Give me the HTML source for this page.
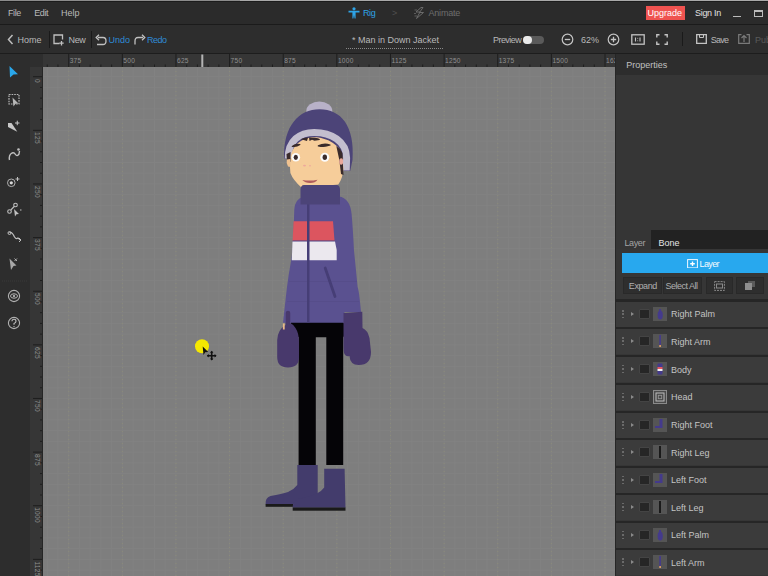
<!DOCTYPE html>
<html><head><meta charset="utf-8">
<style>
*{margin:0;padding:0;box-sizing:border-box}
html,body{width:768px;height:576px;overflow:hidden;background:#2b2b2b;font-family:"Liberation Sans",sans-serif;font-size:9px;color:#b9b9b9}
.a{position:absolute}
.t{position:absolute;white-space:nowrap;line-height:10px}
.rl{position:absolute;font-size:6.6px;color:#909090;line-height:6px;white-space:nowrap;letter-spacing:0.25px}
.row{position:absolute;left:616px;width:152px;height:27px;background:#3b3b3b;border-top:2px solid #262626}
.row .lb{position:absolute;left:55px;top:7.5px;line-height:10px;color:#c4c4c4}
.row .cb{position:absolute;left:23px;top:7px;width:11px;height:10px;background:#262626;border:1px solid #444;border-radius:1px}
.row .th{position:absolute;left:37px;top:5px;width:14px;height:14px;background:#4e4e4e}
.row .tr{position:absolute;left:15px;top:10px;width:0;height:0;border-left:3.5px solid #8a8a8a;border-top:2.5px solid transparent;border-bottom:2.5px solid transparent}
.row .dh{position:absolute;left:6px;top:8px;width:1.5px;height:8px;background:repeating-linear-gradient(#6a6a6a 0 1.5px,transparent 1.5px 3.3px)}
</style></head><body>
<div class="a" style="left:0;top:0;width:768px;height:1px;background:#a9a9a9"></div>
<div class="a" style="left:0;top:0;width:240px;height:1px;background:#8c8c8c"></div>
<div class="a" style="left:0;top:1px;width:768px;height:1px;background:#1c1c1c"></div>
<div class="a" style="left:0;top:2px;width:768px;height:22px;background:#2b2b2b"></div>
<div class="a" style="left:0;top:24px;width:768px;height:1px;background:#1b1b1b"></div>
<div class="t" style="left:8px;top:8px;letter-spacing:-0.4px">File</div>
<div class="t" style="left:34.2px;top:8px;letter-spacing:-0.4px">Edit</div>
<div class="t" style="left:61px;top:8px">Help</div>
<svg class="a" style="left:348px;top:7px" width="12" height="12" viewBox="0 0 12 12">
<circle cx="6" cy="1.8" r="1.6" fill="#2ea3e6"/>
<path d="M0.5,3.8 L11.5,3.8 L11.5,5.4 L7.6,5.4 L7.6,11.5 L6.6,11.5 L6,8 L5.4,11.5 L4.4,11.5 L4.4,5.4 L0.5,5.4 Z" fill="#2ea3e6"/>
</svg>
<div class="t" style="left:363px;top:8px;color:#2ea3e6;letter-spacing:-0.4px">Rig</div>
<div class="t" style="left:392px;top:8px;color:#505050">&gt;</div>
<svg class="a" style="left:414px;top:7px" width="11" height="12" viewBox="0 0 11 12">
<path d="M7,0.5 L2,5 L6,5 L2.5,11.5 L9.5,5.5 L5.5,5.5 L9,0.5 Z" fill="none" stroke="#6a6a6a" stroke-width="1"/>
<path d="M0.5,3 L3,3 M0,6.5 L2,6.5 M0.5,9 L3,9" stroke="#6a6a6a" stroke-width="0.8"/>
</svg>
<div class="t" style="left:428.5px;top:8px;color:#6e6e6e;letter-spacing:-0.2px">Animate</div>
<div class="a" style="left:645.5px;top:5.5px;width:39px;height:14.5px;background:#ef5350"></div>
<div class="t" style="left:647.5px;top:8px;color:#fff">Upgrade</div>
<div class="t" style="left:695px;top:8px;color:#e0e0e0;letter-spacing:-0.3px">Sign In</div>
<div class="a" style="left:732.5px;top:15.5px;width:8.5px;height:1.3px;background:#bbb"></div>
<div class="a" style="left:754px;top:10px;width:9px;height:7px;border:1px solid #bbb;border-top-width:2px"></div>
<div class="a" style="left:0;top:25px;width:768px;height:28px;background:#2d2d2d"></div>
<div class="a" style="left:0;top:53px;width:768px;height:1px;background:#1d1d1d"></div>
<svg class="a" style="left:7px;top:34px" width="7" height="11" viewBox="0 0 7 11"><path d="M5.5,1 L1.5,5.5 L5.5,10" stroke="#bdbdbd" stroke-width="1.5" fill="none"/></svg>
<div class="t" style="left:17.5px;top:35px">Home</div>
<div class="a" style="left:49px;top:31px;width:1px;height:17px;background:#1a1a1a"></div>
<svg class="a" style="left:53px;top:34px" width="12" height="12" viewBox="0 0 12 12"><path d="M6.5,9.5 L1,9.5 L1,1 L9.5,1 L9.5,5.5" stroke="#c0c0c0" stroke-width="1.3" fill="none"/><path d="M8.5,7 L8.5,11.5 M6.3,9.2 L10.7,9.2" stroke="#c0c0c0" stroke-width="1.3"/></svg>
<div class="t" style="left:68.5px;top:35px;letter-spacing:-0.35px">New</div>
<div class="a" style="left:90.5px;top:31px;width:1px;height:17px;background:#1a1a1a"></div>
<svg class="a" style="left:95px;top:34px" width="12" height="12" viewBox="0 0 12 12"><path d="M3,3.5 L8,3.5 Q11,3.5 11,7 Q11,10.5 8,10.5 L2,10.5" stroke="#c0c0c0" stroke-width="1.3" fill="none"/><path d="M4,0.8 L1.2,3.5 L4,6.2" stroke="#c0c0c0" stroke-width="1.3" fill="none"/></svg>
<div class="t" style="left:108.5px;top:35px;color:#2f8bd6">Undo</div>
<svg class="a" style="left:134px;top:34px" width="12" height="12" viewBox="0 0 12 12"><path d="M9,3.5 L4,3.5 Q1,3.5 1,7 L1,10.5" stroke="#c0c0c0" stroke-width="1.3" fill="none"/><path d="M8,0.8 L10.8,3.5 L8,6.2" stroke="#c0c0c0" stroke-width="1.3" fill="none"/></svg>
<div class="t" style="left:147px;top:35px;color:#2f8bd6;letter-spacing:-0.5px">Redo</div>
<div class="t" style="left:352px;top:35px">* Man in Down Jacket</div>
<div class="a" style="left:346px;top:47.5px;width:97px;height:1px;background:repeating-linear-gradient(90deg,#8a8a8a 0 1px,transparent 1px 2px)"></div>
<div class="t" style="left:493px;top:35px;color:#b8b8b8;letter-spacing:-0.55px">Preview</div>
<div class="a" style="left:523px;top:36px;width:21px;height:7.5px;border-radius:4px;background:#5a5a5a"></div>
<div class="a" style="left:523px;top:35.5px;width:8.5px;height:8.5px;border-radius:50%;background:#eaeaea"></div>
<svg class="a" style="left:561px;top:33px" width="13" height="13" viewBox="0 0 13 13"><circle cx="6.5" cy="6.5" r="5.3" stroke="#c4c4c4" stroke-width="1.2" fill="none"/><path d="M3.8,6.5 L9.2,6.5" stroke="#c4c4c4" stroke-width="1.3"/></svg>
<div class="t" style="left:581px;top:35px">62%</div>
<svg class="a" style="left:606.5px;top:33px" width="13" height="13" viewBox="0 0 13 13"><circle cx="6.5" cy="6.5" r="5.3" stroke="#c4c4c4" stroke-width="1.2" fill="none"/><path d="M3.8,6.5 L9.2,6.5 M6.5,3.8 L6.5,9.2" stroke="#c4c4c4" stroke-width="1.3"/></svg>
<svg class="a" style="left:631px;top:34px" width="14" height="11" viewBox="0 0 14 11"><rect x="0.8" y="0.8" width="12.4" height="9.4" stroke="#c4c4c4" stroke-width="1.3" fill="none"/><path d="M4.5,3.5 L4.5,7.5 M9,3.5 L9,7.5" stroke="#c4c4c4" stroke-width="1.1"/><circle cx="6.75" cy="4.3" r="0.5" fill="#c4c4c4"/><circle cx="6.75" cy="6.7" r="0.5" fill="#c4c4c4"/></svg>
<svg class="a" style="left:656px;top:34px" width="12" height="11" viewBox="0 0 12 11"><path d="M0.8,3.5 L0.8,0.8 L3.5,0.8 M8.5,0.8 L11.2,0.8 L11.2,3.5 M11.2,7.5 L11.2,10.2 L8.5,10.2 M3.5,10.2 L0.8,10.2 L0.8,7.5" stroke="#c4c4c4" stroke-width="1.4" fill="none"/></svg>
<div class="a" style="left:681.5px;top:31.5px;width:1px;height:14px;background:#1a1a1a"></div>
<svg class="a" style="left:695.5px;top:34px" width="11" height="10" viewBox="0 0 11 10"><path d="M0.7,0.7 L10.3,0.7 L10.3,9.3 L0.7,9.3 Z" stroke="#c4c4c4" stroke-width="1.3" fill="none"/><path d="M3.5,0.7 L3.5,3.5 L7.5,3.5 L7.5,0.7" stroke="#c4c4c4" stroke-width="1" fill="none"/></svg>
<div class="t" style="left:710.8px;top:35px;letter-spacing:-0.8px">Save</div>
<svg class="a" style="left:738px;top:34px" width="12" height="10" viewBox="0 0 12 10"><path d="M3.5,0.7 L0.7,0.7 L0.7,9.3 L11.3,9.3 L11.3,0.7 L8.5,0.7" stroke="#7a7a7a" stroke-width="1.2" fill="none"/><path d="M6,8 L6,1.5 M3.5,4 L6,1.5 L8.5,4" stroke="#7a7a7a" stroke-width="1.2" fill="none"/></svg>
<div class="t" style="left:755px;top:35px;color:#5a5a5a">Pub</div>
<div class="a" style="left:0;top:54px;width:30px;height:522px;background:#2d2d2d"></div>
<div class="a" style="left:30px;top:54px;width:13px;height:522px;background:#363636"></div>
<div class="a" style="left:30px;top:54px;width:13px;height:13px;background:#2e2e2e"></div>
<div class="a" style="left:43px;top:54px;width:572px;height:13px;background:#363636"></div>
<div class="a" style="left:43px;top:67px;width:572px;height:509px;background:#7e7e7e"></div>
<svg class="a" style="left:43px;top:67px" width="572" height="509">
<line x1="4.25" y1="0" x2="4.25" y2="509" stroke="#828282" stroke-width="1"/>
<line x1="14.97" y1="0" x2="14.97" y2="509" stroke="#828282" stroke-width="1"/>
<line x1="25.70" y1="0" x2="25.70" y2="509" stroke="#828282" stroke-width="1"/>
<line x1="36.43" y1="0" x2="36.43" y2="509" stroke="#828282" stroke-width="1"/>
<line x1="47.15" y1="0" x2="47.15" y2="509" stroke="#828282" stroke-width="1"/>
<line x1="57.88" y1="0" x2="57.88" y2="509" stroke="#828282" stroke-width="1"/>
<line x1="68.60" y1="0" x2="68.60" y2="509" stroke="#828282" stroke-width="1"/>
<line x1="79.33" y1="0" x2="79.33" y2="509" stroke="#828282" stroke-width="1"/>
<line x1="90.06" y1="0" x2="90.06" y2="509" stroke="#828282" stroke-width="1"/>
<line x1="100.78" y1="0" x2="100.78" y2="509" stroke="#828282" stroke-width="1"/>
<line x1="111.51" y1="0" x2="111.51" y2="509" stroke="#828282" stroke-width="1"/>
<line x1="122.23" y1="0" x2="122.23" y2="509" stroke="#828282" stroke-width="1"/>
<line x1="132.96" y1="0" x2="132.96" y2="509" stroke="#828282" stroke-width="1"/>
<line x1="143.69" y1="0" x2="143.69" y2="509" stroke="#828282" stroke-width="1"/>
<line x1="154.41" y1="0" x2="154.41" y2="509" stroke="#828282" stroke-width="1"/>
<line x1="165.14" y1="0" x2="165.14" y2="509" stroke="#828282" stroke-width="1"/>
<line x1="175.86" y1="0" x2="175.86" y2="509" stroke="#828282" stroke-width="1"/>
<line x1="186.59" y1="0" x2="186.59" y2="509" stroke="#828282" stroke-width="1"/>
<line x1="197.32" y1="0" x2="197.32" y2="509" stroke="#828282" stroke-width="1"/>
<line x1="208.04" y1="0" x2="208.04" y2="509" stroke="#828282" stroke-width="1"/>
<line x1="218.77" y1="0" x2="218.77" y2="509" stroke="#828282" stroke-width="1"/>
<line x1="229.49" y1="0" x2="229.49" y2="509" stroke="#828282" stroke-width="1"/>
<line x1="240.22" y1="0" x2="240.22" y2="509" stroke="#828282" stroke-width="1"/>
<line x1="250.95" y1="0" x2="250.95" y2="509" stroke="#828282" stroke-width="1"/>
<line x1="261.67" y1="0" x2="261.67" y2="509" stroke="#828282" stroke-width="1"/>
<line x1="272.40" y1="0" x2="272.40" y2="509" stroke="#828282" stroke-width="1"/>
<line x1="283.12" y1="0" x2="283.12" y2="509" stroke="#828282" stroke-width="1"/>
<line x1="293.85" y1="0" x2="293.85" y2="509" stroke="#828282" stroke-width="1"/>
<line x1="304.58" y1="0" x2="304.58" y2="509" stroke="#828282" stroke-width="1"/>
<line x1="315.30" y1="0" x2="315.30" y2="509" stroke="#828282" stroke-width="1"/>
<line x1="326.03" y1="0" x2="326.03" y2="509" stroke="#828282" stroke-width="1"/>
<line x1="336.75" y1="0" x2="336.75" y2="509" stroke="#828282" stroke-width="1"/>
<line x1="347.48" y1="0" x2="347.48" y2="509" stroke="#828282" stroke-width="1"/>
<line x1="358.21" y1="0" x2="358.21" y2="509" stroke="#828282" stroke-width="1"/>
<line x1="368.93" y1="0" x2="368.93" y2="509" stroke="#828282" stroke-width="1"/>
<line x1="379.66" y1="0" x2="379.66" y2="509" stroke="#828282" stroke-width="1"/>
<line x1="390.38" y1="0" x2="390.38" y2="509" stroke="#828282" stroke-width="1"/>
<line x1="401.11" y1="0" x2="401.11" y2="509" stroke="#828282" stroke-width="1"/>
<line x1="411.84" y1="0" x2="411.84" y2="509" stroke="#828282" stroke-width="1"/>
<line x1="422.56" y1="0" x2="422.56" y2="509" stroke="#828282" stroke-width="1"/>
<line x1="433.29" y1="0" x2="433.29" y2="509" stroke="#828282" stroke-width="1"/>
<line x1="444.01" y1="0" x2="444.01" y2="509" stroke="#828282" stroke-width="1"/>
<line x1="454.74" y1="0" x2="454.74" y2="509" stroke="#828282" stroke-width="1"/>
<line x1="465.47" y1="0" x2="465.47" y2="509" stroke="#828282" stroke-width="1"/>
<line x1="476.19" y1="0" x2="476.19" y2="509" stroke="#828282" stroke-width="1"/>
<line x1="486.92" y1="0" x2="486.92" y2="509" stroke="#828282" stroke-width="1"/>
<line x1="497.64" y1="0" x2="497.64" y2="509" stroke="#828282" stroke-width="1"/>
<line x1="508.37" y1="0" x2="508.37" y2="509" stroke="#828282" stroke-width="1"/>
<line x1="519.10" y1="0" x2="519.10" y2="509" stroke="#828282" stroke-width="1"/>
<line x1="529.82" y1="0" x2="529.82" y2="509" stroke="#828282" stroke-width="1"/>
<line x1="540.55" y1="0" x2="540.55" y2="509" stroke="#828282" stroke-width="1"/>
<line x1="551.27" y1="0" x2="551.27" y2="509" stroke="#828282" stroke-width="1"/>
<line x1="562.00" y1="0" x2="562.00" y2="509" stroke="#828282" stroke-width="1"/>
<line x1="0" y1="9.70" x2="572" y2="9.70" stroke="#828282" stroke-width="1"/>
<line x1="0" y1="20.43" x2="572" y2="20.43" stroke="#828282" stroke-width="1"/>
<line x1="0" y1="31.15" x2="572" y2="31.15" stroke="#828282" stroke-width="1"/>
<line x1="0" y1="41.88" x2="572" y2="41.88" stroke="#828282" stroke-width="1"/>
<line x1="0" y1="52.60" x2="572" y2="52.60" stroke="#828282" stroke-width="1"/>
<line x1="0" y1="63.33" x2="572" y2="63.33" stroke="#828282" stroke-width="1"/>
<line x1="0" y1="74.06" x2="572" y2="74.06" stroke="#828282" stroke-width="1"/>
<line x1="0" y1="84.78" x2="572" y2="84.78" stroke="#828282" stroke-width="1"/>
<line x1="0" y1="95.51" x2="572" y2="95.51" stroke="#828282" stroke-width="1"/>
<line x1="0" y1="106.23" x2="572" y2="106.23" stroke="#828282" stroke-width="1"/>
<line x1="0" y1="116.96" x2="572" y2="116.96" stroke="#828282" stroke-width="1"/>
<line x1="0" y1="127.69" x2="572" y2="127.69" stroke="#828282" stroke-width="1"/>
<line x1="0" y1="138.41" x2="572" y2="138.41" stroke="#828282" stroke-width="1"/>
<line x1="0" y1="149.14" x2="572" y2="149.14" stroke="#828282" stroke-width="1"/>
<line x1="0" y1="159.86" x2="572" y2="159.86" stroke="#828282" stroke-width="1"/>
<line x1="0" y1="170.59" x2="572" y2="170.59" stroke="#828282" stroke-width="1"/>
<line x1="0" y1="181.32" x2="572" y2="181.32" stroke="#828282" stroke-width="1"/>
<line x1="0" y1="192.04" x2="572" y2="192.04" stroke="#828282" stroke-width="1"/>
<line x1="0" y1="202.77" x2="572" y2="202.77" stroke="#828282" stroke-width="1"/>
<line x1="0" y1="213.49" x2="572" y2="213.49" stroke="#828282" stroke-width="1"/>
<line x1="0" y1="224.22" x2="572" y2="224.22" stroke="#828282" stroke-width="1"/>
<line x1="0" y1="234.95" x2="572" y2="234.95" stroke="#828282" stroke-width="1"/>
<line x1="0" y1="245.67" x2="572" y2="245.67" stroke="#828282" stroke-width="1"/>
<line x1="0" y1="256.40" x2="572" y2="256.40" stroke="#828282" stroke-width="1"/>
<line x1="0" y1="267.12" x2="572" y2="267.12" stroke="#828282" stroke-width="1"/>
<line x1="0" y1="277.85" x2="572" y2="277.85" stroke="#828282" stroke-width="1"/>
<line x1="0" y1="288.58" x2="572" y2="288.58" stroke="#828282" stroke-width="1"/>
<line x1="0" y1="299.30" x2="572" y2="299.30" stroke="#828282" stroke-width="1"/>
<line x1="0" y1="310.03" x2="572" y2="310.03" stroke="#828282" stroke-width="1"/>
<line x1="0" y1="320.75" x2="572" y2="320.75" stroke="#828282" stroke-width="1"/>
<line x1="0" y1="331.48" x2="572" y2="331.48" stroke="#828282" stroke-width="1"/>
<line x1="0" y1="342.21" x2="572" y2="342.21" stroke="#828282" stroke-width="1"/>
<line x1="0" y1="352.93" x2="572" y2="352.93" stroke="#828282" stroke-width="1"/>
<line x1="0" y1="363.66" x2="572" y2="363.66" stroke="#828282" stroke-width="1"/>
<line x1="0" y1="374.38" x2="572" y2="374.38" stroke="#828282" stroke-width="1"/>
<line x1="0" y1="385.11" x2="572" y2="385.11" stroke="#828282" stroke-width="1"/>
<line x1="0" y1="395.84" x2="572" y2="395.84" stroke="#828282" stroke-width="1"/>
<line x1="0" y1="406.56" x2="572" y2="406.56" stroke="#828282" stroke-width="1"/>
<line x1="0" y1="417.29" x2="572" y2="417.29" stroke="#828282" stroke-width="1"/>
<line x1="0" y1="428.01" x2="572" y2="428.01" stroke="#828282" stroke-width="1"/>
<line x1="0" y1="438.74" x2="572" y2="438.74" stroke="#828282" stroke-width="1"/>
<line x1="0" y1="449.47" x2="572" y2="449.47" stroke="#828282" stroke-width="1"/>
<line x1="0" y1="460.19" x2="572" y2="460.19" stroke="#828282" stroke-width="1"/>
<line x1="0" y1="470.92" x2="572" y2="470.92" stroke="#828282" stroke-width="1"/>
<line x1="0" y1="481.64" x2="572" y2="481.64" stroke="#828282" stroke-width="1"/>
<line x1="0" y1="492.37" x2="572" y2="492.37" stroke="#828282" stroke-width="1"/>
<line x1="0" y1="503.10" x2="572" y2="503.10" stroke="#828282" stroke-width="1"/>
<line x1="25.70" y1="0" x2="25.70" y2="509" stroke="#8b8b7a" stroke-width="1" stroke-dasharray="1 3"/>
<line x1="79.33" y1="0" x2="79.33" y2="509" stroke="#8b8b7a" stroke-width="1" stroke-dasharray="1 3"/>
<line x1="132.96" y1="0" x2="132.96" y2="509" stroke="#8b8b7a" stroke-width="1" stroke-dasharray="1 3"/>
<line x1="186.59" y1="0" x2="186.59" y2="509" stroke="#8b8b7a" stroke-width="1" stroke-dasharray="1 3"/>
<line x1="240.22" y1="0" x2="240.22" y2="509" stroke="#8b8b7a" stroke-width="1" stroke-dasharray="1 3"/>
<line x1="293.85" y1="0" x2="293.85" y2="509" stroke="#8b8b7a" stroke-width="1" stroke-dasharray="1 3"/>
<line x1="347.48" y1="0" x2="347.48" y2="509" stroke="#8b8b7a" stroke-width="1" stroke-dasharray="1 3"/>
<line x1="401.11" y1="0" x2="401.11" y2="509" stroke="#8b8b7a" stroke-width="1" stroke-dasharray="1 3"/>
<line x1="454.74" y1="0" x2="454.74" y2="509" stroke="#8b8b7a" stroke-width="1" stroke-dasharray="1 3"/>
<line x1="508.37" y1="0" x2="508.37" y2="509" stroke="#8b8b7a" stroke-width="1" stroke-dasharray="1 3"/>
<line x1="562.00" y1="0" x2="562.00" y2="509" stroke="#8b8b7a" stroke-width="1" stroke-dasharray="1 3"/>
</svg>
<svg class="a" style="left:43px;top:54px" width="572" height="13">
<line x1="25.70" y1="0" x2="25.70" y2="13" stroke="#1e1e1e" stroke-width="1"/>
<line x1="79.33" y1="0" x2="79.33" y2="13" stroke="#1e1e1e" stroke-width="1"/>
<line x1="132.96" y1="0" x2="132.96" y2="13" stroke="#1e1e1e" stroke-width="1"/>
<line x1="186.59" y1="0" x2="186.59" y2="13" stroke="#1e1e1e" stroke-width="1"/>
<line x1="240.22" y1="0" x2="240.22" y2="13" stroke="#1e1e1e" stroke-width="1"/>
<line x1="293.85" y1="0" x2="293.85" y2="13" stroke="#1e1e1e" stroke-width="1"/>
<line x1="347.48" y1="0" x2="347.48" y2="13" stroke="#1e1e1e" stroke-width="1"/>
<line x1="401.11" y1="0" x2="401.11" y2="13" stroke="#1e1e1e" stroke-width="1"/>
<line x1="454.74" y1="0" x2="454.74" y2="13" stroke="#1e1e1e" stroke-width="1"/>
<line x1="508.37" y1="0" x2="508.37" y2="13" stroke="#1e1e1e" stroke-width="1"/>
<line x1="562.00" y1="0" x2="562.00" y2="13" stroke="#1e1e1e" stroke-width="1"/>
<line x1="4.25" y1="10.5" x2="4.25" y2="13" stroke="#1e1e1e" stroke-width="1"/>
<line x1="14.97" y1="10.5" x2="14.97" y2="13" stroke="#1e1e1e" stroke-width="1"/>
<line x1="36.43" y1="10.5" x2="36.43" y2="13" stroke="#1e1e1e" stroke-width="1"/>
<line x1="47.15" y1="10.5" x2="47.15" y2="13" stroke="#1e1e1e" stroke-width="1"/>
<line x1="57.88" y1="10.5" x2="57.88" y2="13" stroke="#1e1e1e" stroke-width="1"/>
<line x1="68.60" y1="10.5" x2="68.60" y2="13" stroke="#1e1e1e" stroke-width="1"/>
<line x1="90.06" y1="10.5" x2="90.06" y2="13" stroke="#1e1e1e" stroke-width="1"/>
<line x1="100.78" y1="10.5" x2="100.78" y2="13" stroke="#1e1e1e" stroke-width="1"/>
<line x1="111.51" y1="10.5" x2="111.51" y2="13" stroke="#1e1e1e" stroke-width="1"/>
<line x1="122.23" y1="10.5" x2="122.23" y2="13" stroke="#1e1e1e" stroke-width="1"/>
<line x1="143.69" y1="10.5" x2="143.69" y2="13" stroke="#1e1e1e" stroke-width="1"/>
<line x1="154.41" y1="10.5" x2="154.41" y2="13" stroke="#1e1e1e" stroke-width="1"/>
<line x1="165.14" y1="10.5" x2="165.14" y2="13" stroke="#1e1e1e" stroke-width="1"/>
<line x1="175.86" y1="10.5" x2="175.86" y2="13" stroke="#1e1e1e" stroke-width="1"/>
<line x1="197.32" y1="10.5" x2="197.32" y2="13" stroke="#1e1e1e" stroke-width="1"/>
<line x1="208.04" y1="10.5" x2="208.04" y2="13" stroke="#1e1e1e" stroke-width="1"/>
<line x1="218.77" y1="10.5" x2="218.77" y2="13" stroke="#1e1e1e" stroke-width="1"/>
<line x1="229.49" y1="10.5" x2="229.49" y2="13" stroke="#1e1e1e" stroke-width="1"/>
<line x1="250.95" y1="10.5" x2="250.95" y2="13" stroke="#1e1e1e" stroke-width="1"/>
<line x1="261.67" y1="10.5" x2="261.67" y2="13" stroke="#1e1e1e" stroke-width="1"/>
<line x1="272.40" y1="10.5" x2="272.40" y2="13" stroke="#1e1e1e" stroke-width="1"/>
<line x1="283.12" y1="10.5" x2="283.12" y2="13" stroke="#1e1e1e" stroke-width="1"/>
<line x1="304.58" y1="10.5" x2="304.58" y2="13" stroke="#1e1e1e" stroke-width="1"/>
<line x1="315.30" y1="10.5" x2="315.30" y2="13" stroke="#1e1e1e" stroke-width="1"/>
<line x1="326.03" y1="10.5" x2="326.03" y2="13" stroke="#1e1e1e" stroke-width="1"/>
<line x1="336.75" y1="10.5" x2="336.75" y2="13" stroke="#1e1e1e" stroke-width="1"/>
<line x1="358.21" y1="10.5" x2="358.21" y2="13" stroke="#1e1e1e" stroke-width="1"/>
<line x1="368.93" y1="10.5" x2="368.93" y2="13" stroke="#1e1e1e" stroke-width="1"/>
<line x1="379.66" y1="10.5" x2="379.66" y2="13" stroke="#1e1e1e" stroke-width="1"/>
<line x1="390.38" y1="10.5" x2="390.38" y2="13" stroke="#1e1e1e" stroke-width="1"/>
<line x1="411.84" y1="10.5" x2="411.84" y2="13" stroke="#1e1e1e" stroke-width="1"/>
<line x1="422.56" y1="10.5" x2="422.56" y2="13" stroke="#1e1e1e" stroke-width="1"/>
<line x1="433.29" y1="10.5" x2="433.29" y2="13" stroke="#1e1e1e" stroke-width="1"/>
<line x1="444.01" y1="10.5" x2="444.01" y2="13" stroke="#1e1e1e" stroke-width="1"/>
<line x1="465.47" y1="10.5" x2="465.47" y2="13" stroke="#1e1e1e" stroke-width="1"/>
<line x1="476.19" y1="10.5" x2="476.19" y2="13" stroke="#1e1e1e" stroke-width="1"/>
<line x1="486.92" y1="10.5" x2="486.92" y2="13" stroke="#1e1e1e" stroke-width="1"/>
<line x1="497.64" y1="10.5" x2="497.64" y2="13" stroke="#1e1e1e" stroke-width="1"/>
<line x1="519.10" y1="10.5" x2="519.10" y2="13" stroke="#1e1e1e" stroke-width="1"/>
<line x1="529.82" y1="10.5" x2="529.82" y2="13" stroke="#1e1e1e" stroke-width="1"/>
<line x1="540.55" y1="10.5" x2="540.55" y2="13" stroke="#1e1e1e" stroke-width="1"/>
<line x1="551.27" y1="10.5" x2="551.27" y2="13" stroke="#1e1e1e" stroke-width="1"/>
<rect x="158.3" y="0.5" width="2" height="12.5" fill="#b4b4b4"/>
</svg>
<div class="rl" style="left:69.7px;top:57.6px">375</div>
<div class="rl" style="left:123.3px;top:57.6px">500</div>
<div class="rl" style="left:177.0px;top:57.6px">625</div>
<div class="rl" style="left:230.6px;top:57.6px">750</div>
<div class="rl" style="left:284.2px;top:57.6px">875</div>
<div class="rl" style="left:337.9px;top:57.6px">1000</div>
<div class="rl" style="left:391.5px;top:57.6px">1125</div>
<div class="rl" style="left:445.1px;top:57.6px">1250</div>
<div class="rl" style="left:498.7px;top:57.6px">1375</div>
<div class="rl" style="left:552.4px;top:57.6px">1500</div>
<div class="rl" style="left:606.0px;top:57.6px">1625</div>

<svg class="a" style="left:30px;top:67px" width="13" height="509">
<line x1="3" y1="9.70" x2="13" y2="9.70" stroke="#1e1e1e" stroke-width="1"/>
<line x1="3" y1="63.33" x2="13" y2="63.33" stroke="#1e1e1e" stroke-width="1"/>
<line x1="3" y1="116.96" x2="13" y2="116.96" stroke="#1e1e1e" stroke-width="1"/>
<line x1="3" y1="170.59" x2="13" y2="170.59" stroke="#1e1e1e" stroke-width="1"/>
<line x1="3" y1="224.22" x2="13" y2="224.22" stroke="#1e1e1e" stroke-width="1"/>
<line x1="3" y1="277.85" x2="13" y2="277.85" stroke="#1e1e1e" stroke-width="1"/>
<line x1="3" y1="331.48" x2="13" y2="331.48" stroke="#1e1e1e" stroke-width="1"/>
<line x1="3" y1="385.11" x2="13" y2="385.11" stroke="#1e1e1e" stroke-width="1"/>
<line x1="3" y1="438.74" x2="13" y2="438.74" stroke="#1e1e1e" stroke-width="1"/>
<line x1="3" y1="492.37" x2="13" y2="492.37" stroke="#1e1e1e" stroke-width="1"/>
<line x1="3" y1="546.00" x2="13" y2="546.00" stroke="#1e1e1e" stroke-width="1"/>
<line x1="10" y1="20.43" x2="13" y2="20.43" stroke="#1e1e1e" stroke-width="1"/>
<line x1="10" y1="31.15" x2="13" y2="31.15" stroke="#1e1e1e" stroke-width="1"/>
<line x1="10" y1="41.88" x2="13" y2="41.88" stroke="#1e1e1e" stroke-width="1"/>
<line x1="10" y1="52.60" x2="13" y2="52.60" stroke="#1e1e1e" stroke-width="1"/>
<line x1="10" y1="74.06" x2="13" y2="74.06" stroke="#1e1e1e" stroke-width="1"/>
<line x1="10" y1="84.78" x2="13" y2="84.78" stroke="#1e1e1e" stroke-width="1"/>
<line x1="10" y1="95.51" x2="13" y2="95.51" stroke="#1e1e1e" stroke-width="1"/>
<line x1="10" y1="106.23" x2="13" y2="106.23" stroke="#1e1e1e" stroke-width="1"/>
<line x1="10" y1="127.69" x2="13" y2="127.69" stroke="#1e1e1e" stroke-width="1"/>
<line x1="10" y1="138.41" x2="13" y2="138.41" stroke="#1e1e1e" stroke-width="1"/>
<line x1="10" y1="149.14" x2="13" y2="149.14" stroke="#1e1e1e" stroke-width="1"/>
<line x1="10" y1="159.86" x2="13" y2="159.86" stroke="#1e1e1e" stroke-width="1"/>
<line x1="10" y1="181.32" x2="13" y2="181.32" stroke="#1e1e1e" stroke-width="1"/>
<line x1="10" y1="192.04" x2="13" y2="192.04" stroke="#1e1e1e" stroke-width="1"/>
<line x1="10" y1="202.77" x2="13" y2="202.77" stroke="#1e1e1e" stroke-width="1"/>
<line x1="10" y1="213.49" x2="13" y2="213.49" stroke="#1e1e1e" stroke-width="1"/>
<line x1="10" y1="234.95" x2="13" y2="234.95" stroke="#1e1e1e" stroke-width="1"/>
<line x1="10" y1="245.67" x2="13" y2="245.67" stroke="#1e1e1e" stroke-width="1"/>
<line x1="10" y1="256.40" x2="13" y2="256.40" stroke="#1e1e1e" stroke-width="1"/>
<line x1="10" y1="267.12" x2="13" y2="267.12" stroke="#1e1e1e" stroke-width="1"/>
<line x1="10" y1="288.58" x2="13" y2="288.58" stroke="#1e1e1e" stroke-width="1"/>
<line x1="10" y1="299.30" x2="13" y2="299.30" stroke="#1e1e1e" stroke-width="1"/>
<line x1="10" y1="310.03" x2="13" y2="310.03" stroke="#1e1e1e" stroke-width="1"/>
<line x1="10" y1="320.75" x2="13" y2="320.75" stroke="#1e1e1e" stroke-width="1"/>
<line x1="10" y1="342.21" x2="13" y2="342.21" stroke="#1e1e1e" stroke-width="1"/>
<line x1="10" y1="352.93" x2="13" y2="352.93" stroke="#1e1e1e" stroke-width="1"/>
<line x1="10" y1="363.66" x2="13" y2="363.66" stroke="#1e1e1e" stroke-width="1"/>
<line x1="10" y1="374.38" x2="13" y2="374.38" stroke="#1e1e1e" stroke-width="1"/>
<line x1="10" y1="395.84" x2="13" y2="395.84" stroke="#1e1e1e" stroke-width="1"/>
<line x1="10" y1="406.56" x2="13" y2="406.56" stroke="#1e1e1e" stroke-width="1"/>
<line x1="10" y1="417.29" x2="13" y2="417.29" stroke="#1e1e1e" stroke-width="1"/>
<line x1="10" y1="428.01" x2="13" y2="428.01" stroke="#1e1e1e" stroke-width="1"/>
<line x1="10" y1="449.47" x2="13" y2="449.47" stroke="#1e1e1e" stroke-width="1"/>
<line x1="10" y1="460.19" x2="13" y2="460.19" stroke="#1e1e1e" stroke-width="1"/>
<line x1="10" y1="470.92" x2="13" y2="470.92" stroke="#1e1e1e" stroke-width="1"/>
<line x1="10" y1="481.64" x2="13" y2="481.64" stroke="#1e1e1e" stroke-width="1"/>
<line x1="10" y1="503.10" x2="13" y2="503.10" stroke="#1e1e1e" stroke-width="1"/>
</svg>
<div class="rl" style="left:34.7px;top:77.5px;width:3.9px;transform:rotate(90deg);text-align:center">0</div>
<div class="rl" style="left:30.8px;top:135.0px;width:11.8px;transform:rotate(90deg);text-align:center">125</div>
<div class="rl" style="left:30.8px;top:188.7px;width:11.8px;transform:rotate(90deg);text-align:center">250</div>
<div class="rl" style="left:30.8px;top:242.3px;width:11.8px;transform:rotate(90deg);text-align:center">375</div>
<div class="rl" style="left:30.8px;top:295.9px;width:11.8px;transform:rotate(90deg);text-align:center">500</div>
<div class="rl" style="left:30.8px;top:349.6px;width:11.8px;transform:rotate(90deg);text-align:center">625</div>
<div class="rl" style="left:30.8px;top:403.2px;width:11.8px;transform:rotate(90deg);text-align:center">750</div>
<div class="rl" style="left:30.8px;top:456.8px;width:11.8px;transform:rotate(90deg);text-align:center">875</div>
<div class="rl" style="left:28.8px;top:512.4px;width:15.8px;transform:rotate(90deg);text-align:center">1000</div>
<div class="rl" style="left:28.8px;top:566.0px;width:15.8px;transform:rotate(90deg);text-align:center">1125</div>
<div class="a" style="left:42px;top:67px;width:1px;height:509px;background:#262626"></div>
<svg class="a" style="left:0;top:0" width="768" height="576" viewBox="0 0 768 576">
<!-- pants -->
<path d="M291,322 L343.3,322 Q346,326 345.5,331 Q345,335 343.2,337.5 L343.2,465 L326.3,465 L326.3,337.3 L315.8,337.3 L315.8,465 L298.6,465 L298.6,337 L291,337 Z" fill="#050407"/>
<!-- left mitten (behind jacket) -->
<path d="M285.5,313 Q287.9,310.5 290.3,313 L290.3,323 Q293.5,324.5 295.5,328 Q298.8,333 298.9,341 L299,357 Q299,367.5 288,367.5 Q277.2,367.5 277.2,357 L277.2,340 Q277.5,330 285.5,325 Z" fill="#48396c"/>
<rect x="282.9" y="323.5" width="1.8" height="6" fill="#e8b888"/>
<!-- jacket body -->
<path d="M303,197 Q295,199 294.3,209.5 L293.6,230 Q293,250 290.7,263 Q288.5,275 287,287 Q285.5,300 283,322.8 L344.5,322.8 L344.5,312 L361,312 Q359,290 357.6,287 Q355.5,265 354,250.7 Q353,230 351.6,214 Q350,198 339,196.5 Z" fill="#5a5190"/>
<!-- quilting lines -->
<path d="M289,281.5 L357,281.5 M287,301.5 L359,301.5" stroke="#564d8a" stroke-width="1"/>
<!-- stripes -->
<path d="M293.6,221.2 L333,221.2 L334.5,240.8 L292.6,240.8 Z" fill="#dc555f"/>
<rect x="292.6" y="240.6" width="42" height="1.2" fill="#4a4280"/>
<path d="M292.5,241.6 L335,241.6 L336.7,250 L336.7,260.3 L291.8,260.3 Z" fill="#ebe8ee"/>
<!-- zipper -->
<rect x="307" y="203" width="2.5" height="119.5" fill="#463e76"/>
<!-- pocket -->
<path d="M325.2,268 L335,296.5" stroke="#463e76" stroke-width="2.8" stroke-linecap="round"/>
<!-- right mitten -->
<path d="M343.5,313 L362.3,311.8 L362.5,328 Q367.5,330 369.5,338 L371,352 Q371,365 358.7,365 Q350,365 349.5,356 Q346,357 344.5,354 Q343.5,352 343.5,345 Z" fill="#48396c"/>
<!-- left sleeve cuff line -->
<path d="M288,313 L288,323" stroke="#48396c" stroke-width="4.5" stroke-linecap="round"/>
<!-- pompom -->
<ellipse cx="319.3" cy="111" rx="13" ry="9.5" fill="#b8b1c8"/>
<!-- hat dome -->
<path d="M284.2,158.5 C283,126 299,109.3 319.5,109.3 C341,109.3 355,126 352.5,160 L350.2,171 L342,171 L291,158.5 Z" fill="#4c4478"/>
<!-- band -->
<path d="M288.3,158.5 C287.8,140.5 300,132.4 314.2,132.4 C331,132.4 346.5,141 346.6,158 L346.2,170.5" stroke="#c3bece" stroke-width="7" fill="none"/>
<!-- face interior (skin) -->
<path d="M290.6,160 C290.6,146 302,137.3 314.2,137.3 C326,137.3 342.2,145 342.4,158 L343.5,168 Q343,178 338.3,184.4 L302,188 Q293,180 290.4,172.9 Q289.9,168 289.9,162 Z" fill="#f6cd9a"/>
<!-- hair left bit + ear -->
<path d="M286.5,154 L290.6,152 L290.4,162 L287,161 Z" fill="#3a2b2b"/>
<path d="M286.8,159.5 Q286,163 288,166.5 L290.4,167 L290.4,159 Z" fill="#f0c290"/>
<!-- hair right sideburn -->
<path d="M336.3,146 Q340,148 342.4,153 L343.5,175 L341,174 Q340,160 336.3,146 Z" fill="#3a2b2b"/>
<ellipse cx="341.2" cy="161.5" rx="1.9" ry="3.3" fill="#eaa89a"/>
<!-- hair top fringe -->
<path d="M300.5,139.3 Q304,137.5 308,137.6 L307,141 Q303.5,139.8 300.5,139.3 Z" fill="#3a2b2b"/>
<path d="M309,137.6 Q315,137.5 318,138.3 Q322,139.8 318,140.2 L314.5,140.8 L312,139.8 L309.5,141 Z" fill="#3a2b2b"/>
<!-- eyebrows -->
<path d="M292.3,146.4 Q295.5,143.8 299.8,144.6 Q297,146.8 292.3,146.4 Z" fill="#3a2b2b" stroke="#3a2b2b" stroke-width="1.3" stroke-linejoin="round"/>
<path d="M318.3,145.8 Q324,143.2 330,145 Q324.5,147.4 318.3,145.8 Z" fill="#3a2b2b" stroke="#3a2b2b" stroke-width="1.3" stroke-linejoin="round"/>
<!-- eyes -->
<circle cx="295.8" cy="157.2" r="4.3" fill="#fafafa"/>
<ellipse cx="295.8" cy="157.3" rx="2.1" ry="2.6" fill="#3a2b2b"/>
<circle cx="324.8" cy="157.2" r="4.5" fill="#fafafa"/>
<ellipse cx="324.8" cy="157.3" rx="2.2" ry="2.7" fill="#3a2b2b"/>
<!-- nose -->
<ellipse cx="304.5" cy="165.6" rx="1.5" ry="0.9" fill="#eea89c"/>
<ellipse cx="310" cy="165.8" rx="0.9" ry="0.8" fill="#eea89c"/>
<!-- mouth -->
<path d="M302.4,180 Q310,181.3 317.5,179.7 Q315,183.2 310,183 Q305,183 302.4,180 Z" fill="#b05c5c"/>
<!-- collar -->
<path d="M304,185 L337,185 Q340,185.5 340,190 L340,204.5 L300.5,204.5 L300.5,190 Q300.7,185 304,185 Z" fill="#4c4478"/>
<!-- boots -->
<path d="M297.3,465 L317.7,465 L317.7,504.2 L265.6,504.2 Q265,498 270.5,496 Q282,494 288,492 Q294,489.5 297.3,485 Z" fill="#433c6c"/>
<rect x="265.6" y="504" width="27.4" height="2.8" fill="#1a1a1a"/>
<path d="M324.2,468.8 L344.6,468.8 L345.5,507.7 L292.7,507.7 Q292.5,501.5 298,499 Q309,496.5 316,494 Q321.5,491.5 324.2,487.5 Z" fill="#433c6c"/>
<rect x="292.7" y="507.5" width="52.8" height="3.2" fill="#1a1a1a"/>
</svg>
<svg class="a" style="left:190px;top:334px" width="30" height="30" viewBox="190 334 30 30">
<circle cx="202" cy="346.3" r="7" fill="#f5e800"/>
<path d="M202.7,346.5 L208.2,352 L205.2,352.3 L203.5,355 Z" fill="#111"/>
<path d="M211.7,351.5 L211.7,360 M207.4,355.7 L216,355.7" stroke="#111" stroke-width="1.6"/>
<path d="M211.7,350.8 L210,352.8 L213.4,352.8 Z M211.7,360.6 L210,358.6 L213.4,358.6 Z M206.8,355.7 L208.8,354 L208.8,357.4 Z M216.6,355.7 L214.6,354 L214.6,357.4 Z" fill="#111"/>
</svg>
<svg class="a" style="left:0;top:54px" width="30" height="290" viewBox="0 54 30 290">
<path d="M9.5,66 L18,74.3 L13.5,74.5 L10,77.5 Z" fill="#2aa7ea"/>
<g stroke="#b8b8b8" stroke-width="1.2" fill="none">
<path d="M9,94.5 L19,94.5 L19,104 L9,104 Z" stroke-dasharray="1.6 1"/>
</g>
<path d="M12.5,97.5 L18.5,103.5 L15.5,103.8 L13.5,106.5 Z" fill="#b8b8b8"/>
<path d="M8,123 L11.5,123 L17.3,131.8 L8,127 Z" fill="#c8c8c8"/>
<path d="M15,123 L19.5,123 M17.25,120.7 L17.25,125.2" stroke="#c8c8c8" stroke-width="1"/>
<path d="M9.5,160 Q8.5,155 12,153 Q14,152 15.5,154.5 Q17,157 19,154 L19.5,151" stroke="#c0c0c0" stroke-width="1.4" fill="none"/>
<circle cx="18.5" cy="149.5" r="1.3" fill="#c0c0c0"/>
<circle cx="11.3" cy="182.8" r="3.8" stroke="#b0b0b0" stroke-width="1" fill="none"/>
<circle cx="11.3" cy="182.8" r="1.6" fill="#d8d8d8"/>
<path d="M15.5,179 L19.5,179 M17.5,177 L17.5,181" stroke="#c0c0c0" stroke-width="1"/>
<circle cx="9.5" cy="211.5" r="1.8" stroke="#c0c0c0" stroke-width="1.1" fill="none"/>
<circle cx="15.5" cy="205" r="1.8" stroke="#c0c0c0" stroke-width="1.1" fill="none"/>
<path d="M10.8,210 L14.2,206.5" stroke="#c0c0c0" stroke-width="1.1"/>
<path d="M14,209 L19,214 L16.5,214.2 L15,216.5 Z" fill="#c0c0c0"/>
<path d="M20,210 L21.5,210" stroke="#c0c0c0" stroke-width="1"/>
<path d="M9.5,233 Q11,231 13.5,235 Q15.5,240 18,238 L20.5,240" stroke="#c0c0c0" stroke-width="1.2" fill="none"/>
<circle cx="9.5" cy="233" r="1.5" stroke="#c0c0c0" stroke-width="1" fill="none"/>
<path d="M19,238 L21,240 L19,242" stroke="#c0c0c0" stroke-width="1" fill="none"/>
<path d="M9.5,258.5 L16.5,265.5 L13.5,266 L11,270 Z" fill="#a8a8a8"/>
<path d="M14.5,258.5 L17,261 M17,258.5 L14.5,261" stroke="#b8b8b8" stroke-width="0.9"/>
<path d="M2,281 L28,281" stroke="#3a3a3a" stroke-width="1" stroke-dasharray="1 1"/>
<circle cx="14" cy="296" r="5.6" stroke="#b0b0b0" stroke-width="1.1" fill="none"/>
<ellipse cx="14" cy="296" rx="3.5" ry="2.2" stroke="#b8b8b8" stroke-width="1" fill="none"/>
<circle cx="14" cy="296" r="1.1" fill="#c0c0c0"/>
<circle cx="14" cy="323" r="5.6" stroke="#b0b0b0" stroke-width="1.1" fill="none"/>
<path d="M12,321.3 Q12,319.3 14,319.3 Q16,319.3 16,321.2 Q16,322.5 14,323.5 L14,324.8" stroke="#c0c0c0" stroke-width="1.1" fill="none"/>
<circle cx="14" cy="326.6" r="0.7" fill="#c0c0c0"/>
</svg>
<div class="a" style="left:615px;top:54px;width:153px;height:522px;background:#363636"></div>
<div class="a" style="left:615px;top:54px;width:1px;height:522px;background:#262626"></div>
<div class="a" style="left:616px;top:54px;width:152px;height:20.5px;background:#2d2d2d"></div>
<div class="t" style="left:626.3px;top:60px;color:#c0c0c0">Properties</div>
<div class="a" style="left:616px;top:230px;width:152px;height:19px;background:#222"></div>
<div class="a" style="left:616px;top:230px;width:34.5px;height:19px;background:#353535"></div>
<div class="t" style="left:624.5px;top:238px;color:#a4a4a4;letter-spacing:-0.4px">Layer</div>
<div class="t" style="left:658.5px;top:238px;color:#e4e4e4">Bone</div>
<div class="a" style="left:621.5px;top:253px;width:146.5px;height:19.8px;background:#28a8ee"></div>
<svg class="a" style="left:686.5px;top:258.8px" width="11" height="9.5" viewBox="0 0 11 9.5"><rect x="0.6" y="0.6" width="9.8" height="8.3" stroke="#f0f8ff" stroke-width="1" fill="none"/><path d="M5.5,2.5 L5.5,7 M3.2,4.75 L7.8,4.75" stroke="#fff" stroke-width="1.4"/></svg>
<div class="t" style="left:699.5px;top:258.5px;color:#f4faff;letter-spacing:-0.6px">Layer</div>
<div class="a" style="left:622.5px;top:277px;width:39px;height:16.5px;background:#2e2e2e;border:1px solid #292929"></div>
<div class="t" style="left:628.8px;top:281px;color:#b0b0b0;letter-spacing:-0.4px">Expand</div>
<div class="a" style="left:662.5px;top:277px;width:39.5px;height:16.5px;background:#2e2e2e;border:1px solid #292929"></div>
<div class="t" style="left:665.5px;top:281px;color:#b0b0b0;letter-spacing:-0.5px">Select All</div>
<div class="a" style="left:705.5px;top:277px;width:27px;height:16.5px;background:#2e2e2e;border:1px solid #292929"></div>
<svg class="a" style="left:714px;top:280.5px" width="11" height="10" viewBox="0 0 11 10"><path d="M0.6,0.6 L10.4,0.6 L10.4,9.4 L0.6,9.4 Z" stroke="#8a8a8a" stroke-width="1" fill="none" stroke-dasharray="2 1"/><rect x="2.5" y="3" width="6" height="4" fill="none" stroke="#8a8a8a" stroke-width="1"/></svg>
<div class="a" style="left:736px;top:277px;width:28px;height:16.5px;background:#2e2e2e;border:1px solid #292929"></div>
<svg class="a" style="left:745px;top:281px" width="10" height="9" viewBox="0 0 10 9"><rect x="3" y="0" width="7" height="6" fill="#5a5a5a"/><rect x="0" y="2" width="7" height="7" fill="#8e8e8e"/></svg>
<div class="a" style="left:616px;top:298.5px;width:152px;height:2px;background:#262626"></div>
<div class="row" style="top:299.5px"><div class="dh"></div><div class="tr"></div><div class="cb"></div><div class="th" style="background:#555"><svg width="14" height="14" viewBox="0 0 14 14"><ellipse cx="7.2" cy="8" rx="2.6" ry="4.6" fill="#443a8c"/><rect x="6" y="2" width="2" height="3" fill="#443a8c"/></svg></div><div class="lb">Right Palm</div></div>
<div class="row" style="top:327px"><div class="dh"></div><div class="tr"></div><div class="cb"></div><div class="th" style="background:#555"><svg width="14" height="14" viewBox="0 0 14 14"><rect x="6.3" y="1" width="1.6" height="11" fill="#443a8c"/><rect x="6.3" y="11" width="1.6" height="2" fill="#e0a060"/></svg></div><div class="lb">Right Arm</div></div>
<div class="row" style="top:355px"><div class="dh"></div><div class="tr"></div><div class="cb"></div><div class="th" style="background:#555"><svg width="14" height="14" viewBox="0 0 14 14"><rect x="4.5" y="1.5" width="5" height="11" rx="1" fill="#443a8c"/><rect x="4.5" y="5" width="5" height="2" fill="#e05860"/><rect x="4.5" y="7" width="5" height="2" fill="#f0f0f0"/></svg></div><div class="lb">Body</div></div>
<div class="row" style="top:382.5px"><div class="dh"></div><div class="tr"></div><div class="cb"></div><div class="th" style="background:#4a4a4a"><svg width="14" height="14" viewBox="0 0 14 14"><rect x="0.5" y="0.5" width="13" height="13" fill="none" stroke="#8a8a8a" stroke-width="1"/><rect x="3" y="3" width="8" height="8" fill="none" stroke="#bdbdbd" stroke-width="1"/><rect x="5.3" y="5.3" width="3.4" height="3.4" fill="none" stroke="#999" stroke-width="0.8"/></svg></div><div class="lb">Head</div></div>
<div class="row" style="top:410.5px"><div class="dh"></div><div class="tr"></div><div class="cb"></div><div class="th" style="background:#555"><svg width="14" height="14" viewBox="0 0 14 14"><rect x="6.5" y="1" width="3" height="7" fill="#443a8c"/><path d="M2,8 L9.5,8 L9.5,10 L2,10 Z" fill="#443a8c"/></svg></div><div class="lb">Right Foot</div></div>
<div class="row" style="top:438px"><div class="dh"></div><div class="tr"></div><div class="cb"></div><div class="th" style="background:#555"><svg width="14" height="14" viewBox="0 0 14 14"><rect x="6" y="1" width="2" height="12" fill="#1a1a1a"/></svg></div><div class="lb">Right Leg</div></div>
<div class="row" style="top:465.5px"><div class="dh"></div><div class="tr"></div><div class="cb"></div><div class="th" style="background:#555"><svg width="14" height="14" viewBox="0 0 14 14"><rect x="6.5" y="1" width="3" height="7" fill="#443a8c"/><path d="M2,8 L9.5,8 L9.5,10 L2,10 Z" fill="#443a8c"/></svg></div><div class="lb">Left Foot</div></div>
<div class="row" style="top:493px"><div class="dh"></div><div class="tr"></div><div class="cb"></div><div class="th" style="background:#555"><svg width="14" height="14" viewBox="0 0 14 14"><rect x="6" y="1" width="2" height="12" fill="#1a1a1a"/></svg></div><div class="lb">Left Leg</div></div>
<div class="row" style="top:520.5px"><div class="dh"></div><div class="tr"></div><div class="cb"></div><div class="th" style="background:#555"><svg width="14" height="14" viewBox="0 0 14 14"><ellipse cx="7.2" cy="8" rx="2.6" ry="4.6" fill="#443a8c"/><rect x="6" y="2" width="2" height="3" fill="#443a8c"/></svg></div><div class="lb">Left Palm</div></div>
<div class="row" style="top:548px"><div class="dh"></div><div class="tr"></div><div class="cb"></div><div class="th" style="background:#555"><svg width="14" height="14" viewBox="0 0 14 14"><rect x="6.3" y="1" width="1.6" height="11" fill="#443a8c"/><rect x="6.3" y="11" width="1.6" height="2" fill="#e0a060"/></svg></div><div class="lb">Left Arm</div></div>
</body></html>
